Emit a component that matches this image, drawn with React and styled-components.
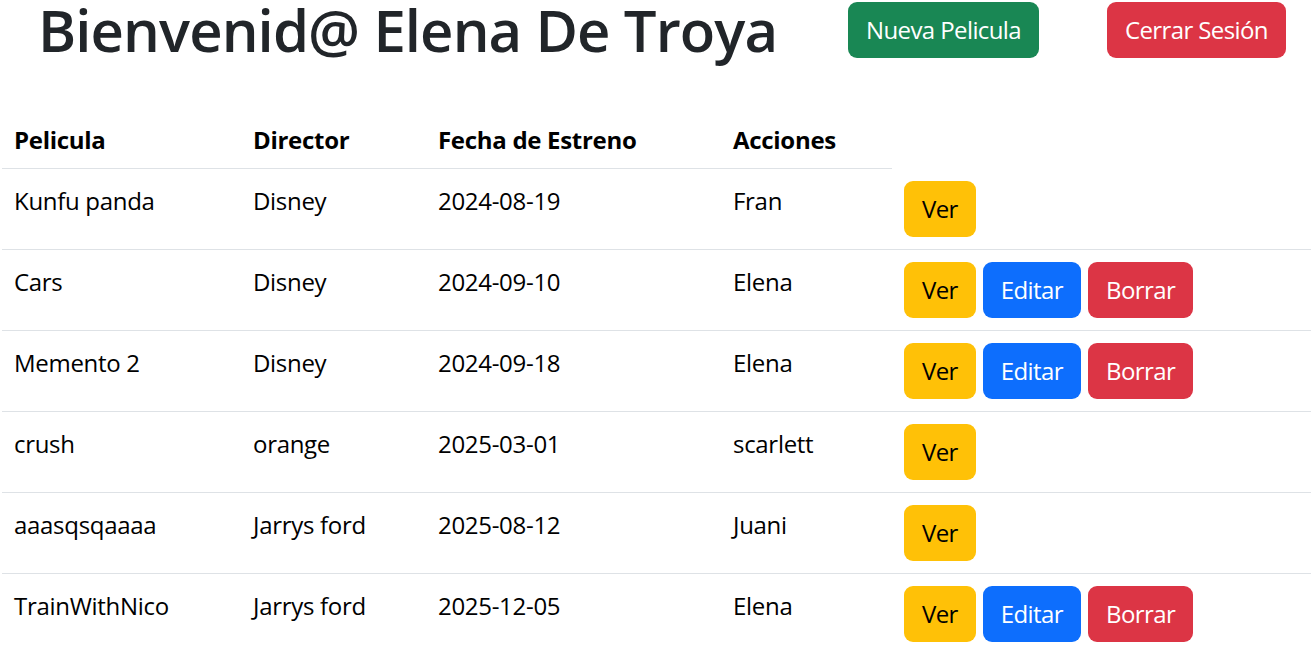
import React from "react";
import styled, { createGlobalStyle } from "styled-components";

const FONT = `"Open Sans", "Noto Sans", "Liberation Sans", sans-serif`;

const GlobalStyle = createGlobalStyle`
  html, body { margin: 0; padding: 0; background: #fff; }
  body { font-family: ${FONT}; color: #212529; }
  * { box-sizing: border-box; }
`;

const Page = styled.div`
  width: 1311px;
  overflow: hidden;
`;

const Header = styled.header`
  display: grid;
  grid-template-columns: 810px auto 1fr auto;
  align-items: start;
  height: 108px;
  padding: 0 25px 0 38px;
`;

const Title = styled.h1`
  margin: 0;
  font-size: 58px;
  font-weight: 600;
  line-height: 60px;
  color: #212529;
  white-space: nowrap;
  letter-spacing: -0.9px;
`;

const palette = {
  success: { bg: "#198754", fg: "#fff" },
  danger: { bg: "#dc3545", fg: "#fff" },
  warning: { bg: "#ffc107", fg: "#000" },
  primary: { bg: "#0d6efd", fg: "#fff" },
};

const Button = styled.button`
  display: inline-flex;
  align-items: center;
  justify-content: center;
  height: 56px;
  padding: 0 18px;
  border: 0;
  border-radius: 9px;
  font-family: ${FONT};
  font-size: 24px;
  font-weight: 400;
  line-height: 36px;
  letter-spacing: -0.6px;
  background: ${(p) => palette[p.$variant].bg};
  color: ${(p) => palette[p.$variant].fg};
  margin-top: ${(p) => (p.$top ? "2px" : "0")};
  grid-column: ${(p) => p.$col || "auto"};
  cursor: pointer;
  white-space: nowrap;
`;

const Table = styled.table`
  margin-left: 2px;
  width: 1309px;
  border-collapse: collapse;
  table-layout: fixed;
  color: #000;
  font-size: 24px;
  line-height: 36px;
  vertical-align: top;
`;

const Th = styled.th`
  text-align: left;
  font-weight: 700;
  padding: 14px 12px 10px;
  border-bottom: 1px solid #dee2e6;
  vertical-align: top;
  letter-spacing: -0.3px;
`;

const Td = styled.td`
  padding: ${(p) => (p.$actions ? "12px" : "14px 12px 10px")};
  border-bottom: 1px solid #dee2e6;
  vertical-align: top;
  white-space: nowrap;
  letter-spacing: -0.3px;
`;

const Actions = styled.div`
  display: flex;
  gap: 7px;
`;

const peliculas = [
  { titulo: "Kunfu panda", director: "Disney", fecha: "2024-08-19", usuario: "Fran", propia: false },
  { titulo: "Cars", director: "Disney", fecha: "2024-09-10", usuario: "Elena", propia: true },
  { titulo: "Memento 2", director: "Disney", fecha: "2024-09-18", usuario: "Elena", propia: true },
  { titulo: "crush", director: "orange", fecha: "2025-03-01", usuario: "scarlett", propia: false },
  { titulo: "aaasqsqaaaa", director: "Jarrys ford", fecha: "2025-08-12", usuario: "Juani", propia: false },
  { titulo: "TrainWithNico", director: "Jarrys ford", fecha: "2025-12-05", usuario: "Elena", propia: true },
];

export default function App() {
  return (
    <Page>
      <GlobalStyle />
      <Header>
        <Title>Bienvenid@ Elena De Troya</Title>
        <Button $variant="success" $top>Nueva Pelicula</Button>
        <Button $variant="danger" $top $col="4">Cerrar Sesión</Button>
      </Header>
      <Table>
        <colgroup>
          <col style={{ width: 239 }} />
          <col style={{ width: 185 }} />
          <col style={{ width: 295 }} />
          <col style={{ width: 171 }} />
          <col />
        </colgroup>
        <thead>
          <tr>
            <Th>Pelicula</Th>
            <Th>Director</Th>
            <Th>Fecha de Estreno</Th>
            <Th>Acciones</Th>
          </tr>
        </thead>
        <tbody>
          {peliculas.map((p) => (
            <tr key={p.titulo}>
              <Td>{p.titulo}</Td>
              <Td>{p.director}</Td>
              <Td>{p.fecha}</Td>
              <Td>{p.usuario}</Td>
              <Td $actions>
                <Actions>
                  <Button $variant="warning">Ver</Button>
                  {p.propia && <Button $variant="primary">Editar</Button>}
                  {p.propia && <Button $variant="danger">Borrar</Button>}
                </Actions>
              </Td>
            </tr>
          ))}
        </tbody>
      </Table>
    </Page>
  );
}
